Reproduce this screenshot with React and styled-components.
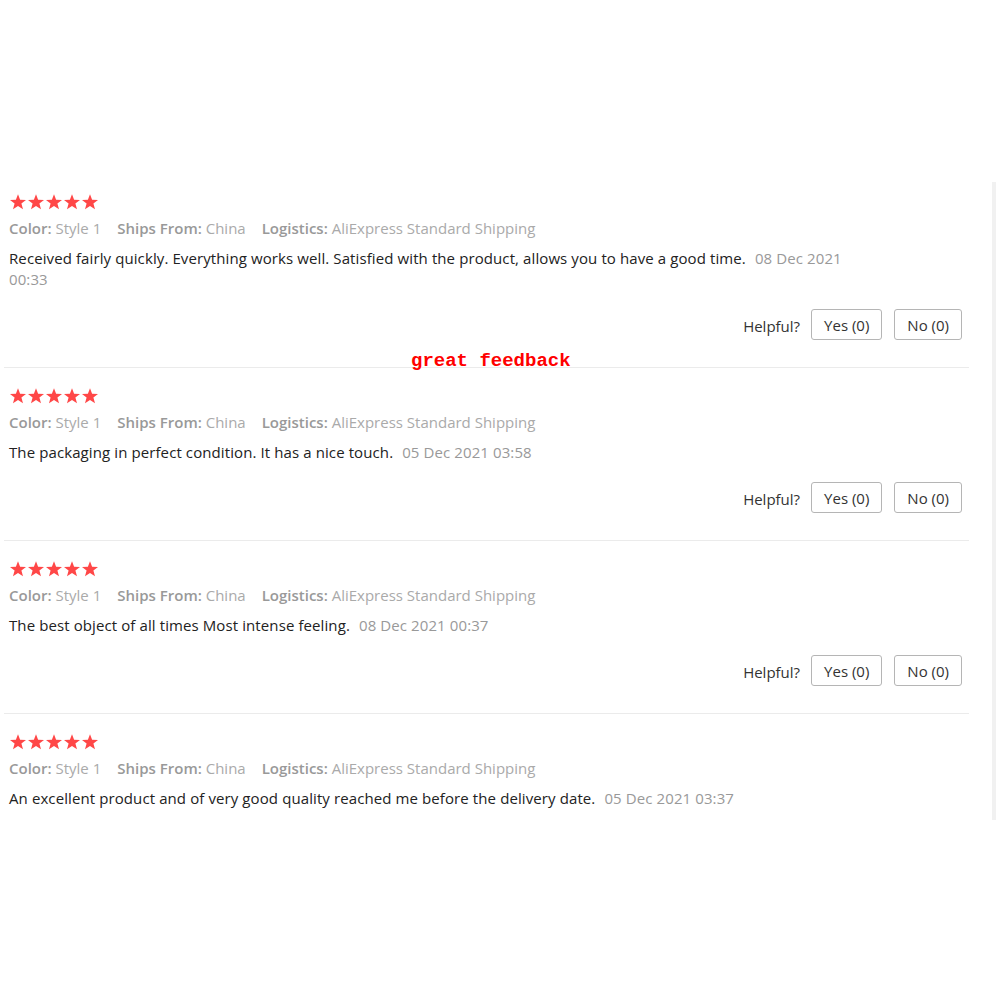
import React from "react"
import styled, { createGlobalStyle } from "styled-components"

const reviews = [
  {
    id: 1,
    text: "Received fairly quickly. Everything works well. Satisfied with the product, allows you to have a good time.",
    date: "08 Dec 2021 00:33",
    helpful: true,
  },
  {
    id: 2,
    text: "The packaging in perfect condition. It has a nice touch.",
    date: "05 Dec 2021 03:58",
    helpful: true,
  },
  {
    id: 3,
    text: "The best object of all times Most intense feeling.",
    date: "08 Dec 2021 00:37",
    helpful: true,
  },
  {
    id: 4,
    text: "An excellent product and of very good quality reached me before the delivery date.",
    date: "05 Dec 2021 03:37",
    helpful: false,
  },
]

const Star = () => (
  <svg width="18" height="16" viewBox="0 0 18 16">
    <path
      d="M9 0.2 L11.1 5.7 L17 5.9 L12.4 9.5 L14 15.3 L9 12 L4 15.3 L5.6 9.5 L1 5.9 L6.9 5.7 Z"
      fill="#ff4747"
    />
  </svg>
)

const Review = ({ review }) => {
  return (
    <ReviewItem $last={!review.helpful}>
      <Stars>
        {[0, 1, 2, 3, 4].map((i) => (
          <Star key={i} />
        ))}
      </Stars>
      <Meta>
        <MetaItem>
          <b>Color:</b> Style 1
        </MetaItem>
        <MetaItem>
          <b>Ships From:</b> China
        </MetaItem>
        <MetaItem>
          <b>Logistics:</b> AliExpress Standard Shipping
        </MetaItem>
      </Meta>
      <Content>
        {review.text} <DateText>{review.date}</DateText>
      </Content>
      {!review.helpful ? null : (
        <HelpfulRow>
          <HelpfulLabel>Helpful?</HelpfulLabel>
          <VoteButton>Yes (0)</VoteButton>
          <VoteButton>No (0)</VoteButton>
        </HelpfulRow>
      )}
    </ReviewItem>
  )
}

const App = () => {
  return (
    <>
      <GlobalStyle />
      <Page>
        <ReviewList>
          {reviews.map((r) => (
            <Review key={r.id} review={r} />
          ))}
          <Stamp>great feedback</Stamp>
        </ReviewList>
        <Rail />
      </Page>
    </>
  )
}

const GlobalStyle = createGlobalStyle`
  body {
    margin: 0;
    background: #fff;
    font-family: "Open Sans", "Liberation Sans", sans-serif;
  }
`
const Page = styled.div`
  display: flex;
  align-items: stretch;
  padding: 174px 0 0 4px;
  width: 1002px;
  box-sizing: border-box;
`
const ReviewList = styled.div`
  position: relative;
  width: 965px;
`
const Rail = styled.div`
  width: 4px;
  margin: 8px 0 0 23px;
  background: #f1f1f1;
`
const ReviewItem = styled.div`
  padding: 20px 7px ${(p) => (p.$last ? "11px" : "27px")} 5px;
  border-bottom: ${(p) => (p.$last ? "none" : "1px solid #ebebeb")};
`
const Stars = styled.div`
  display: flex;
  height: 16px;
`
const Meta = styled.div`
  display: flex;
  gap: 16px;
  margin-top: 8px;
  font-size: 15px;
  line-height: 21px;
  color: #aaa;
`
const MetaItem = styled.span`
  b {
    font-weight: 600;
    color: #999;
  }
`
const Content = styled.div`
  max-width: 850px;
  margin-top: 9px;
  font-size: 15px;
  line-height: 21px;
  letter-spacing: 0.1px;
  color: #222;
`
const DateText = styled.span`
  margin-left: 5px;
  color: #999;
`
const HelpfulRow = styled.div`
  display: flex;
  justify-content: flex-end;
  align-items: center;
  gap: 11px;
  margin-top: 19px;
`
const HelpfulLabel = styled.span`
  font-size: 15px;
  color: #333;
  margin-top: 2px;
`
const VoteButton = styled.button`
  height: 31px;
  padding: 0 12px;
  border: 1px solid #b5b5b5;
  border-radius: 3px;
  background: #fff;
  font-family: "Open Sans", "Liberation Sans", sans-serif;
  font-size: 15px;
  color: #333;
  & + & {
    margin-left: 1px;
  }
`
const Stamp = styled.div`
  position: absolute;
  left: 407px;
  top: 178px;
  font-family: "Liberation Mono", "Courier New", monospace;
  font-size: 19px;
  line-height: 19px;
  font-weight: bold;
  color: #ff0000;
`

export default App
